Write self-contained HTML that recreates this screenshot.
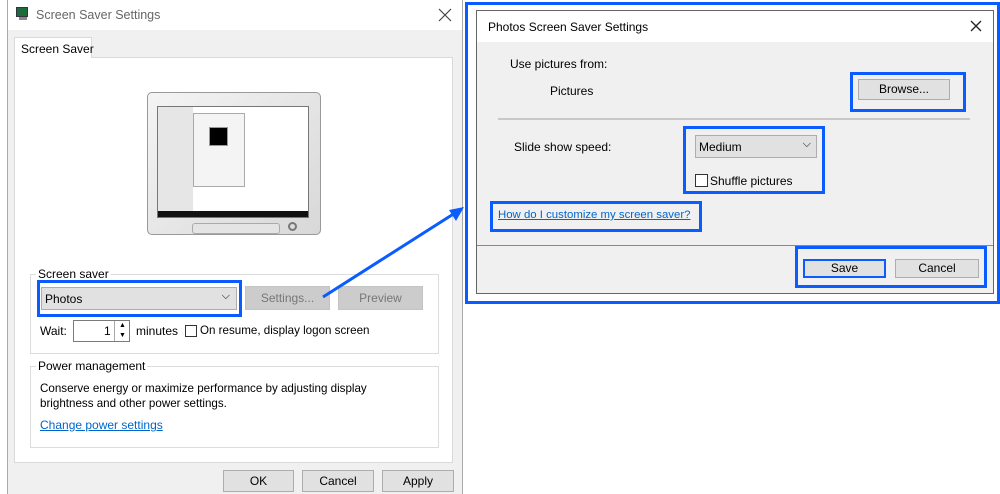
<!DOCTYPE html>
<html><head><style>
*{margin:0;padding:0;box-sizing:border-box}
body{width:1000px;height:494px;background:#fff;position:relative;overflow:hidden;font-family:"Liberation Sans",sans-serif;font-size:12px;color:#000}
.a{position:absolute;white-space:nowrap}
.btn{position:absolute;background:#e1e1e1;border:1px solid #adadad;text-align:center;font-size:12px}
.blue{position:absolute;border:3px solid #0a5cff}
.grp{position:absolute;border:1px solid #dcdcdc}
.lbl{position:absolute;background:#fff;padding:0 2px}
</style></head><body>
<!-- left dialog -->
<div class="a" style="left:7px;top:0;width:456px;height:494px;background:#f0f0f0;border-left:1px solid #aaa;border-right:1px solid #aaa"></div>
<div class="a" style="left:8px;top:0;width:454px;height:30px;background:#fff"></div>
<div class="a" style="left:16px;top:7px;width:12px;height:10px;background:#1d6b3a;border:1px solid #334"></div>
<div class="a" style="left:19px;top:17px;width:8px;height:3px;background:#888"></div>
<div class="a" style="left:36px;top:8px;font-size:12.5px;color:#666">Screen Saver Settings</div>
<svg class="a" style="left:438px;top:8px" width="14" height="14"><path d="M1 1L13 13M13 1L1 13" stroke="#444" stroke-width="1.2"/></svg>
<div class="a" style="left:14px;top:57px;width:439px;height:406px;background:#fff;border:1px solid #d9d9d9"></div>
<div class="a" style="left:14px;top:37px;width:78px;height:21px;background:#fff;border:1px solid #d9d9d9;border-bottom:none;padding:4px 0 0 6px">Screen Saver</div>
<!-- monitor -->
<div class="a" style="left:147px;top:92px;width:174px;height:143px;background:linear-gradient(135deg,#f4f4f4,#d8d8d8);border:1px solid #999;border-radius:5px"></div>
<div class="a" style="left:157px;top:106px;width:152px;height:112px;background:#fff;border:1px solid #777"></div>
<div class="a" style="left:158px;top:107px;width:35px;height:104px;background:#e6e6e6"></div>
<div class="a" style="left:193px;top:113px;width:52px;height:74px;background:#f4f4f4;border:1px solid #aaa"></div>
<div class="a" style="left:209px;top:127px;width:19px;height:19px;background:#000;border:1px solid #999"></div>
<div class="a" style="left:158px;top:211px;width:150px;height:6px;background:#111"></div>
<div class="a" style="left:192px;top:223px;width:88px;height:11px;background:#e4e4e4;border:1px solid #aaa;border-radius:3px"></div>
<div class="a" style="left:288px;top:222px;width:9px;height:9px;border:2px solid #777;border-radius:50%"></div>
<!-- screen saver group -->
<div class="grp" style="left:30px;top:274px;width:409px;height:80px"></div>
<div class="lbl" style="left:36px;top:267px">Screen saver</div>
<div class="blue" style="left:37px;top:280px;width:205px;height:37px"></div>
<div class="a" style="left:41px;top:287px;width:196px;height:23px;background:#e1e1e1;border:1px solid #adadad;padding:4px 0 0 3px">Photos<span style="position:absolute;right:6px;top:2px;font-size:11px">⌵</span></div>
<div class="btn" style="left:245px;top:286px;width:85px;height:24px;line-height:22px;background:#ccc;border-color:#c4c4c4;color:#777">Settings...</div>
<div class="btn" style="left:338px;top:286px;width:85px;height:24px;line-height:22px;background:#ccc;border-color:#c4c4c4;color:#777">Preview</div>
<div class="a" style="left:40px;top:324px">Wait:</div>
<div class="a" style="left:73px;top:320px;width:57px;height:22px;border:1px solid #7a7a7a;background:#fff"><span style="position:absolute;left:30px;top:3px">1</span><div style="position:absolute;left:40px;top:0;width:16px;height:20px;border-left:1px solid #aaa;font-size:7px;line-height:10px;text-align:center">▲<br>▼</div></div>
<div class="a" style="left:136px;top:324px">minutes</div>
<div class="a" style="left:185px;top:325px;width:12px;height:12px;border:1px solid #333;background:#fff"></div>
<div class="a" style="left:200px;top:324px;font-size:11.6px">On resume, display logon screen</div>
<!-- power -->
<div class="grp" style="left:30px;top:366px;width:409px;height:82px"></div>
<div class="lbl" style="left:36px;top:359px">Power management</div>
<div class="a" style="left:40px;top:381px;line-height:15px;font-size:11.6px">Conserve energy or maximize performance by adjusting display<br>brightness and other power settings.</div>
<div class="a" style="left:40px;top:418px;color:#0066cc;text-decoration:underline">Change power settings</div>
<div class="btn" style="left:223px;top:470px;width:71px;height:22px;line-height:20px">OK</div>
<div class="btn" style="left:302px;top:470px;width:72px;height:22px;line-height:20px">Cancel</div>
<div class="btn" style="left:382px;top:470px;width:72px;height:22px;line-height:20px">Apply</div>
<!-- arrow -->
<svg class="a" style="left:0;top:0" width="1000" height="494"><line x1="323" y1="297" x2="455" y2="213" stroke="#0a5cff" stroke-width="3"/><polygon points="464,207 449,210 456,221" fill="#0a5cff"/></svg>
<!-- right dialog -->
<div class="blue" style="left:465px;top:2px;width:535px;height:302px"></div>
<div class="a" style="left:476px;top:10px;width:518px;height:284px;background:#f0f0f0;border:1px solid #666"></div>
<div class="a" style="left:477px;top:11px;width:516px;height:31px;background:#fff"></div>
<div class="a" style="left:488px;top:20px;font-size:12px">Photos Screen Saver Settings</div>
<svg class="a" style="left:970px;top:20px" width="12" height="12"><path d="M1 1L11 11M11 1L1 11" stroke="#222" stroke-width="1.3"/></svg>
<div class="a" style="left:510px;top:57px">Use pictures from:</div>
<div class="a" style="left:550px;top:84px">Pictures</div>
<div class="blue" style="left:850px;top:72px;width:116px;height:40px"></div>
<div class="btn" style="left:858px;top:79px;width:92px;height:21px;line-height:19px">Browse...</div>
<div class="a" style="left:498px;top:118px;width:472px;height:2px;background:#c8c8c8"></div>
<div class="a" style="left:514px;top:140px">Slide show speed:</div>
<div class="blue" style="left:683px;top:126px;width:142px;height:68px"></div>
<div class="a" style="left:695px;top:135px;width:122px;height:23px;background:#e1e1e1;border:1px solid #adadad;padding:4px 0 0 3px">Medium<span style="position:absolute;right:5px;top:2px;font-size:11px">⌵</span></div>
<div class="a" style="left:695px;top:174px;width:13px;height:13px;border:1px solid #333;background:#fff"></div>
<div class="a" style="left:710px;top:174px">Shuffle pictures</div>
<div class="blue" style="left:490px;top:201px;width:212px;height:31px"></div>
<div class="a" style="left:498px;top:209px;color:#0066cc;text-decoration:underline;font-size:11.4px">How do I customize my screen saver?</div>
<div class="a" style="left:477px;top:245px;width:516px;height:1px;background:#888"></div>
<div class="blue" style="left:795px;top:246px;width:192px;height:42px"></div>
<div class="btn" style="left:803px;top:259px;width:83px;height:19px;line-height:15px;border:2px solid #0a5cff">Save</div>
<div class="btn" style="left:895px;top:259px;width:84px;height:19px;line-height:17px">Cancel</div>
</body></html>
